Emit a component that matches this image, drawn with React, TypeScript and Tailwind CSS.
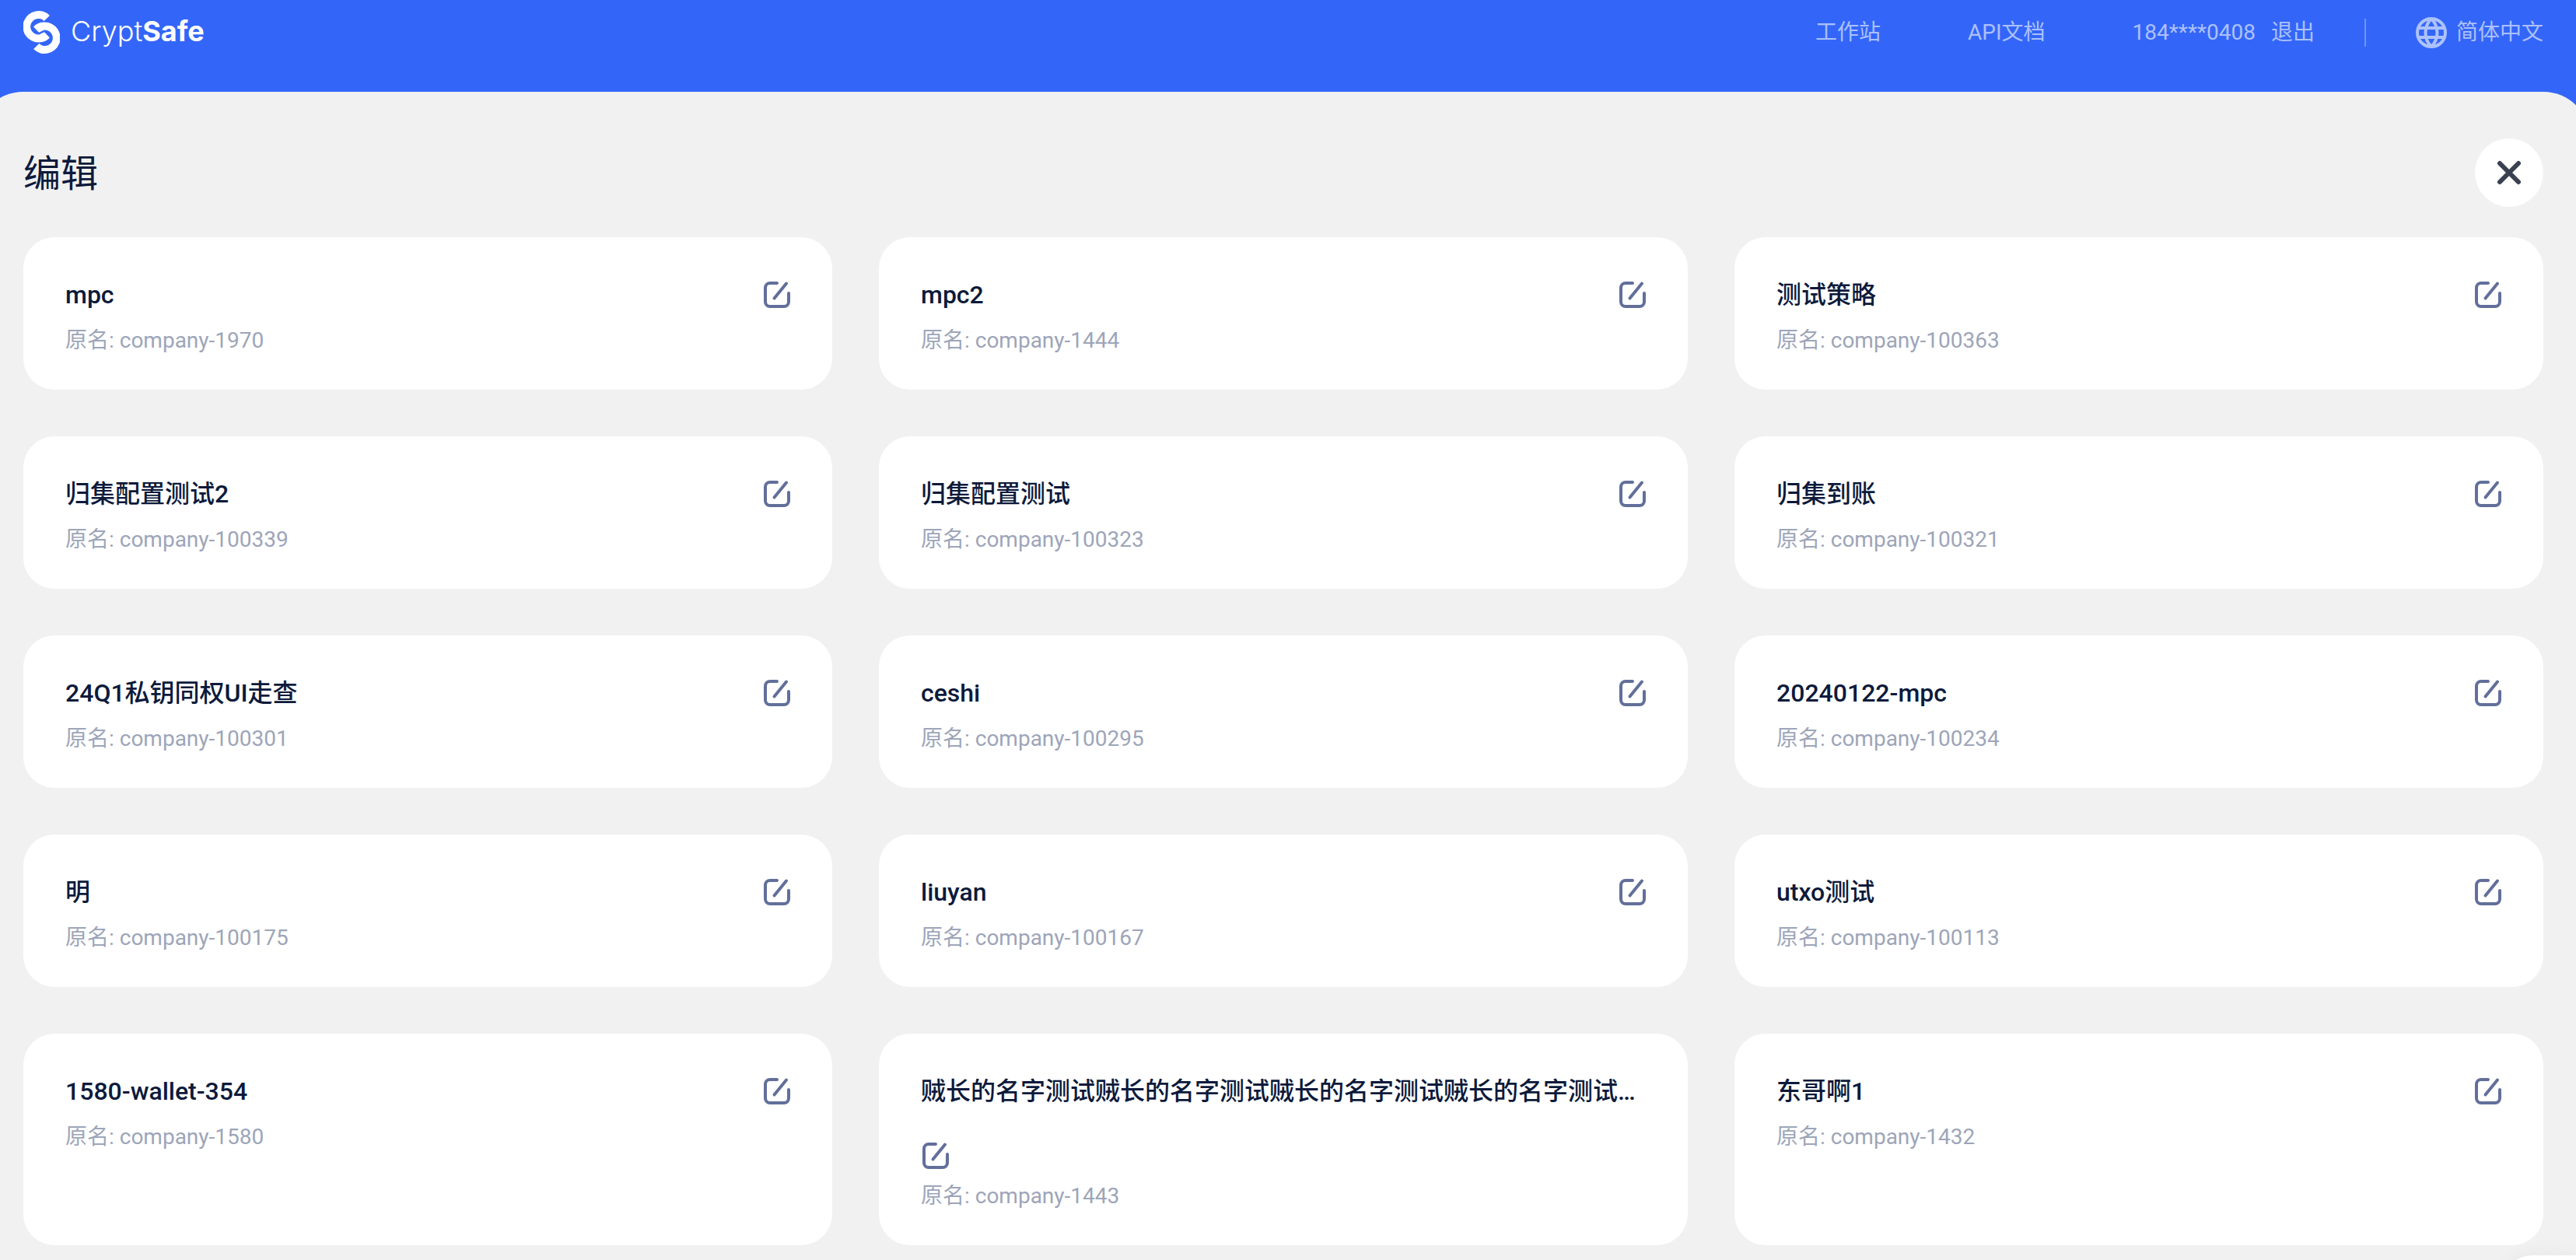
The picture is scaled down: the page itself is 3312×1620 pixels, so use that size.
const cards = [
  { name: 'mpc', original: 'company-1970' },
  { name: 'mpc2', original: 'company-1444' },
  { name: '测试策略', original: 'company-100363' },
  { name: '归集配置测试2', original: 'company-100339' },
  { name: '归集配置测试', original: 'company-100323' },
  { name: '归集到账', original: 'company-100321' },
  { name: '24Q1私钥同权UI走查', original: 'company-100301' },
  { name: 'ceshi', original: 'company-100295' },
  { name: '20240122-mpc', original: 'company-100234' },
  { name: '明', original: 'company-100175' },
  { name: 'liuyan', original: 'company-100167' },
  { name: 'utxo测试', original: 'company-100113' },
  { name: '1580-wallet-354', original: 'company-1580' },
  {
    name: '贼长的名字测试贼长的名字测试贼长的名字测试贼长的名字测试贼长的名字测试',
    original: 'company-1443',
  },
  { name: '东哥啊1', original: 'company-1432' },
];

function LogoMark() {
  return (
    <svg viewBox="0 0 141 166" className="h-[55px] w-[47px] shrink-0" fill="#fff" aria-hidden="true">
      <path d="M102 18A61 61 0 1 0 60 122Q86 122 102 104L81 82L60 92A31 31 0 1 1 80 39Z" />
      <path
        transform="rotate(180 70.5 83)"
        d="M102 18A61 61 0 1 0 60 122Q86 122 102 104L81 82L60 92A31 31 0 1 1 80 39Z"
      />
    </svg>
  );
}

function GlobeIcon() {
  return (
    <svg viewBox="0 0 40 40" className="h-10 w-10" fill="none" stroke="currentColor" strokeWidth="4" aria-hidden="true">
      <path d="M20 2a18 18 0 1 0 0 36a18 18 0 1 0 0-36ZM20 2C10 12 10 28 20 38C30 28 30 12 20 2ZM3 14H37M3 26H37" />
    </svg>
  );
}

function EditIcon() {
  return (
    <svg
      viewBox="0 0 38 38"
      className="h-[38px] w-[38px] shrink-0"
      fill="none"
      stroke="currentColor"
      strokeWidth="4"
      strokeLinecap="round"
      aria-hidden="true"
    >
      <path d="M19 4H10a6 6 0 0 0-6 6v18a6 6 0 0 0 6 6h18a6 6 0 0 0 6-6V17M31 4.5L15.5 23.5" />
    </svg>
  );
}

function Header() {
  return (
    <header className="flex h-[118px] shrink-0 items-start justify-between pt-3.5 pr-[42px] pl-[30px]">
      <a href="#" aria-label="CryptSafe" className="flex items-start gap-3.5 text-white">
        <LogoMark />
        <span className="font-['Inter'] text-[36px] leading-[52px] font-light">
          Crypt<span className="font-bold">Safe</span>
        </span>
      </a>
      <nav className="flex h-14 items-center text-[28px] leading-10 text-white/60">
        <a href="#">工作站</a>
        <a href="#" className="ml-28">API文档</a>
        <span className="ml-28">184****0408</span>
        <button type="button" className="ml-5">退出</button>
        <span className="mx-16 h-9 w-0.5 bg-white/30" />
        <button type="button" className="flex items-center gap-3">
          <GlobeIcon />
          简体中文
        </button>
      </nav>
    </header>
  );
}

function Card({ name, original }: { name: string; original: string }) {
  return (
    <li className="rounded-[40px] bg-white pt-[52px] pr-[52px] pb-[43px] pl-[54px]">
      <div className="flex flex-wrap items-center justify-between gap-y-[46px]">
        <h2 className="max-w-full truncate text-[32px] leading-[44px] font-medium text-[#0d1a3b]">{name}</h2>
        <button type="button" aria-label="编辑名称" className="flex h-[30px] items-center text-[#626f9a]">
          <EditIcon />
        </button>
      </div>
      <p className="mt-[17px] text-[28px] leading-10 text-[#9da5b9]">原名: {original}</p>
    </li>
  );
}

export default function App() {
  return (
    <div
      lang="zh-CN"
      className="flex min-h-screen flex-col overflow-hidden bg-[#3366f8] font-['Roboto','Noto_Sans_CJK_SC',sans-serif]"
    >
      <Header />
      <main className="-mr-[18px] -ml-[30px] grow rounded-t-[60px] bg-[#f1f1f1] px-[60px] pt-[60px]">
        <div className="flex items-end justify-between">
          <h1 className="text-[48px] leading-[84px] text-[#0d1a3b]">编辑</h1>
          <button
            type="button"
            aria-label="关闭"
            className="flex h-[88px] w-[88px] items-center justify-center rounded-full bg-white text-[#394151]"
          >
            <svg viewBox="0 0 32 32" className="h-8 w-8" fill="none" stroke="currentColor" strokeWidth="6" strokeLinecap="round" aria-hidden="true">
              <path d="M4 4L28 28M28 4L4 28" />
            </svg>
          </button>
        </div>
        <ul className="mt-[39px] grid grid-cols-3 gap-[60px]">
          {cards.map((card) => (
            <Card key={card.original} {...card} />
          ))}
        </ul>
      </main>
      <div className="fixed right-0 -bottom-[90px] h-24 w-24 rounded-l-[40px] bg-white shadow-[0_0_24px_rgba(0,0,0,0.05)]" />
    </div>
  );
}
